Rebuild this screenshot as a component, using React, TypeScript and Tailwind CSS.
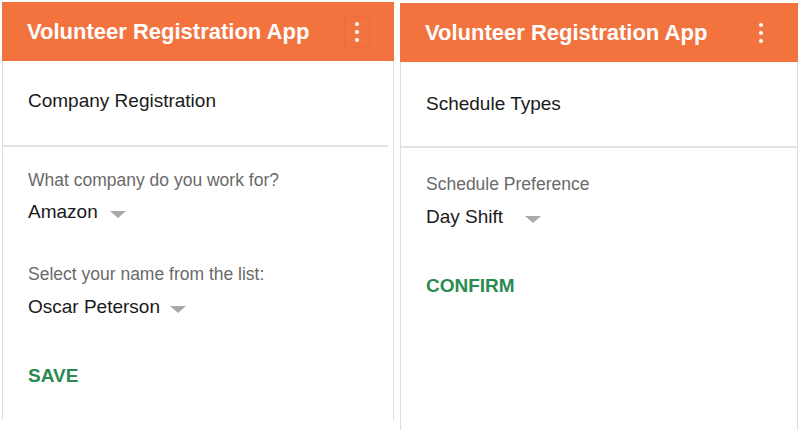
import React from "react";

const font = { fontFamily: '"Liberation Sans", Arial, Helvetica, sans-serif' };

function Kebab({ outlined }: { outlined?: boolean }) {
  return (
    <div
      className={`flex h-[32px] w-[26px] flex-col items-center justify-center gap-[4px] ${
        outlined ? "border border-[#ec6e3c]" : "border border-transparent"
      }`}
    >
      <span className="h-[4px] w-[4px] rounded-full bg-white" />
      <span className="h-[4px] w-[4px] rounded-full bg-white" />
      <span className="h-[4px] w-[4px] rounded-full bg-white" />
    </div>
  );
}

function Caret() {
  return (
    <svg width="16" height="8" viewBox="0 0 16 8" className="mt-[6px]">
      <path d="M0 0 L16 0 L8 7 Z" fill="#a9a9a9" />
    </svg>
  );
}

function Header({ outlined }: { outlined?: boolean }) {
  return (
    <div className="flex h-[59px] items-center justify-between bg-[#f3733f] pl-[25px] pr-[24px]">
      <h1 className="text-[22px] font-bold text-white">
        Volunteer Registration App
      </h1>
      <Kebab outlined={outlined} />
    </div>
  );
}

function Dropdown({ value, gap }: { value: string; gap: string }) {
  return (
    <div className={`flex h-[24px] items-center ${gap}`}>
      <span className="text-[19px] leading-[24px] text-[#1a1a1a]">{value}</span>
      <Caret />
    </div>
  );
}

export default function App() {
  return (
    <div className="flex h-[430px] w-[800px] bg-white" style={font}>
      {/* left screen */}
      <div className="ml-[2px] mt-[2px] flex h-[418px] w-[392px] flex-col">
        <Header outlined />
        <div className="flex flex-1 flex-col border-x border-[#dedede]">
          <div className="flex h-[84px] items-center pl-[25px] pb-[4px]">
            <h2 className="text-[19px] text-[#1a1a1a]">Company Registration</h2>
          </div>
          <div className="mr-[5px] h-[2px] bg-[#e3e3e3]" />
          <div className="flex flex-col pl-[25px]">
            <p className="mt-[21px] text-[17.5px] leading-[24px] text-[#6a6a6a]">
              What company do you work for?
            </p>
            <div className="mt-[8px]">
              <Dropdown value="Amazon" gap="gap-[12px]" />
            </div>
            <p className="mt-[38px] text-[17.5px] leading-[24px] text-[#6a6a6a]">
              Select your name from the list:
            </p>
            <div className="mt-[9px]">
              <Dropdown value="Oscar Peterson" gap="gap-[10px]" />
            </div>
            <button className="mt-[45px] self-start text-[19px] font-bold leading-[24px] text-[#2a8a50]">
              SAVE
            </button>
          </div>
        </div>
      </div>

      {/* right screen */}
      <div className="ml-[6px] mt-[3px] flex w-[398px] flex-col">
        <Header />
        <div className="flex flex-1 flex-col border-x border-[#dedede]">
          <div className="flex h-[84px] items-center pl-[25px]">
            <h2 className="text-[19px] text-[#1a1a1a]">Schedule Types</h2>
          </div>
          <div className="h-[2px] bg-[#e3e3e3]" />
          <div className="flex flex-col pl-[25px]">
            <p className="mt-[24px] text-[17.5px] leading-[24px] text-[#6a6a6a]">
              Schedule Preference
            </p>
            <div className="mt-[9px]">
              <Dropdown value="Day Shift" gap="gap-[22px]" />
            </div>
            <button className="mt-[45px] self-start text-[19px] font-bold leading-[24px] text-[#2a8a50]">
              CONFIRM
            </button>
          </div>
        </div>
      </div>
    </div>
  );
}
